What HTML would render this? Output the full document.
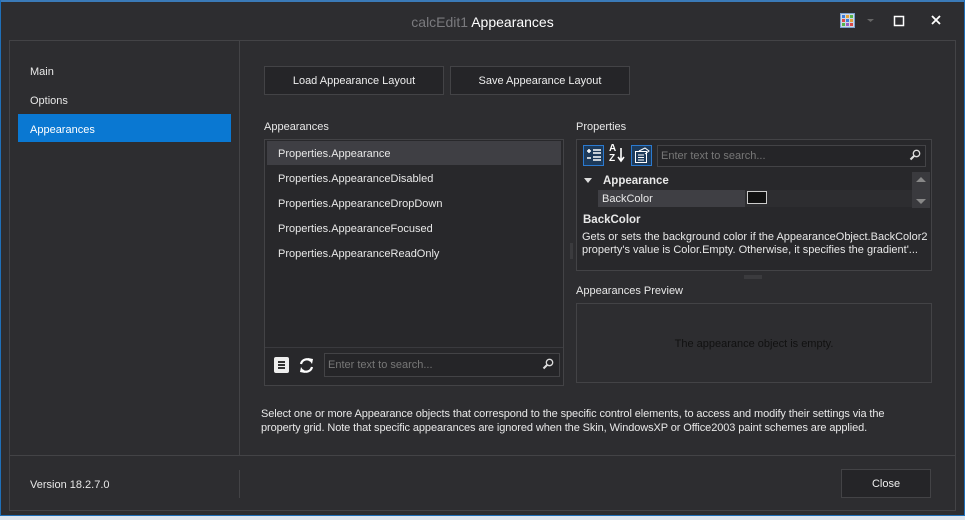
<!DOCTYPE html>
<html><head><meta charset="utf-8"><style>
*{margin:0;padding:0;box-sizing:border-box}
body{width:965px;height:520px;background:#2d2d30;font-family:"Liberation Sans",sans-serif;font-size:11px;color:#e8e8e8;position:relative;overflow:hidden}
.a{position:absolute;white-space:nowrap}
.t{margin-top:1px}
.b{position:absolute;border:1px solid #434346}
.btn{position:absolute;border:1px solid #434346;background:#252528;text-align:center;color:#eee}
</style></head><body>
<div class="a" style="left:0;top:0;width:965px;height:2px;background:#3a7ab8"></div>
<div class="a" style="left:0;top:0;width:1px;height:520px;background:#1f6fb8"></div>
<div class="a" style="right:0;top:0;width:1px;height:520px;background:#1f6fb8"></div>
<div class="a" style="left:0;top:516px;width:965px;height:4px;background:#dfe6ee"></div>
<div class="a" style="left:0;top:515px;width:965px;height:1px;background:#1f6fb8"></div>

<div class="a" style="left:0;width:965px;top:14px;text-align:center;font-size:14px;color:#fff"><span style="color:#7a7a7e">calcEdit1</span> Appearances</div>
<svg class="a" style="left:840px;top:13px" width="15" height="15"><rect x=".5" y=".5" width="14" height="14" fill="#cfd8e6" stroke="#7aa0d0"/><rect x="2" y="2" width="3" height="3" fill="#3c7bd8"/><rect x="6" y="2" width="3" height="3" fill="#e2a13a"/><rect x="10" y="2" width="3" height="3" fill="#56b34a"/><rect x="2" y="6" width="3" height="3" fill="#d94a4a"/><rect x="6" y="6" width="3" height="3" fill="#3c7bd8"/><rect x="10" y="6" width="3" height="3" fill="#e2a13a"/><rect x="2" y="10" width="3" height="3" fill="#56b34a"/><rect x="6" y="10" width="3" height="3" fill="#9a5ac8"/><rect x="10" y="10" width="3" height="3" fill="#d94a4a"/></svg>
<svg class="a" style="left:866px;top:18px" width="9" height="5"><path d="M1 1h7L4.5 4z" fill="#666"/></svg>
<svg class="a" style="left:893px;top:15px" width="12" height="12"><rect x="1.5" y="1.5" width="9" height="9" fill="none" stroke="#fff" stroke-width="1.5"/></svg>
<svg class="a" style="left:931px;top:15px" width="10" height="10"><path d="M1 1L9 9M9 1L1 9" stroke="#fff" stroke-width="1.8"/></svg>

<div class="b" style="left:9px;top:40px;width:947px;height:471px"></div>
<div class="a" style="left:239px;top:41px;width:1px;height:414px;background:#434346"></div>
<div class="a" style="left:10px;top:455px;width:945px;height:1px;background:#434346"></div>
<div class="a" style="left:239px;top:470px;width:1px;height:28px;background:#434346"></div>

<div class="a" style="left:30px;top:66px">Main</div>
<div class="a" style="left:30px;top:95px">Options</div>
<div class="a" style="left:18px;top:114px;width:213px;height:28px;background:#0a78d2"></div>
<div class="a" style="left:30px;top:124px;color:#fff">Appearances</div>

<div class="btn" style="left:264px;top:66px;width:180px;height:29px;line-height:29px">Load Appearance Layout</div>
<div class="btn" style="left:450px;top:66px;width:180px;height:29px;line-height:29px">Save Appearance Layout</div>

<div class="a" style="left:264px;top:121px">Appearances</div>
<div class="b" style="left:264px;top:139px;width:300px;height:247px;background:#28282b"></div>
<div class="a" style="left:267px;top:141px;width:294px;height:24px;background:#3f3f44"></div>
<div class="a" style="left:278px;top:148px">Properties.Appearance</div>
<div class="a" style="left:278px;top:173px">Properties.AppearanceDisabled</div>
<div class="a" style="left:278px;top:198px">Properties.AppearanceDropDown</div>
<div class="a" style="left:278px;top:223px">Properties.AppearanceFocused</div>
<div class="a" style="left:278px;top:248px">Properties.AppearanceReadOnly</div>
<div class="a" style="left:265px;top:347px;width:298px;height:1px;background:#3a3a3e"></div>
<div class="a" style="left:274px;top:357px;width:15px;height:16px;background:#eee;border-radius:2px"></div>
<div class="a" style="left:278px;top:361px;width:7px;height:2px;background:#333;box-shadow:0 3px 0 #333,0 6px 0 #333"></div>
<svg class="a" style="left:298px;top:357px" width="17" height="17" viewBox="0 0 17 17"><path d="M3 7a6 6 0 0 1 10-3M14 10a6 6 0 0 1-10 3" fill="none" stroke="#fff" stroke-width="2.2"/><path d="M10 1l5 1-1 5zM7 16l-5-1 1-5z" fill="#fff"/></svg>
<div class="b" style="left:324px;top:353px;width:236px;height:24px;background:#252528"></div>
<div class="a" style="left:328px;top:359px;color:#777">Enter text to search...</div>
<svg class="a" style="left:542px;top:358px" width="12" height="12"><circle cx="7.5" cy="4.5" r="3.2" fill="none" stroke="#ddd" stroke-width="1.3"/><path d="M5 7L1.5 10.5" stroke="#ddd" stroke-width="2"/></svg>

<div class="a" style="left:570px;top:243px;width:3px;height:16px;background-image:radial-gradient(#666 0.6px,transparent 0.7px);background-size:2px 2px"></div>

<div class="a" style="left:576px;top:121px">Properties</div>
<div class="b" style="left:576px;top:139px;width:356px;height:132px;background:#28282b"></div>
<div class="a" style="left:583px;top:145px;width:21px;height:21px;border:1px solid #2b7ad0;background:#1d3a5a"></div>
<svg class="a" style="left:586px;top:148px" width="16" height="16"><path d="M1 3h4M3 1v4M1 10h4M7 2h8M7 5h8M7 9h8M7 12h8" stroke="#fff" stroke-width="1.5"/></svg>
<div class="a" style="left:609px;top:144px;font-size:10px;font-weight:bold;line-height:10px;color:#fff">A<br>Z</div>
<svg class="a" style="left:617px;top:147px" width="8" height="16"><path d="M4 1v13M1 10l3 4 3-4" stroke="#fff" stroke-width="1.6" fill="none"/></svg>
<div class="a" style="left:631px;top:145px;width:21px;height:21px;border:1px solid #2b7ad0;background:#1d3a5a"></div>
<svg class="a" style="left:634px;top:147px" width="16" height="17"><rect x="1.5" y="4.5" width="11" height="11" fill="none" stroke="#fff"/><path d="M4 8h6M4 10.5h6M4 13h6" stroke="#fff"/><path d="M5 4l6-3 4 3-4 3" fill="none" stroke="#fff"/></svg>
<div class="b" style="left:657px;top:145px;width:269px;height:22px;background:#252528"></div>
<div class="a" style="left:661px;top:150px;color:#777">Enter text to search...</div>
<svg class="a" style="left:909px;top:149px" width="12" height="12"><circle cx="7.5" cy="4.5" r="3.2" fill="none" stroke="#ddd" stroke-width="1.3"/><path d="M5 7L1.5 10.5" stroke="#ddd" stroke-width="2"/></svg>
<svg class="a" style="left:584px;top:178px" width="9" height="6"><path d="M0 0h8L4 5z" fill="#ddd"/></svg>
<div class="a" style="left:603px;top:175px;font-weight:bold;font-size:11.5px">Appearance</div>
<div class="a" style="left:598px;top:190px;width:147px;height:17px;background:#3f3f44"></div>
<div class="a" style="left:745px;top:190px;width:167px;height:17px;background:#2d2d30"></div>
<div class="a" style="left:602px;top:193px">BackColor</div>
<div class="a" style="left:747px;top:191px;width:20px;height:13px;border:1px solid #ccc;background:#111"></div>
<div class="a" style="left:912px;top:172px;width:18px;height:36px;background:#3a3a3e"></div>
<svg class="a" style="left:916px;top:176px" width="10" height="30"><path d="M0 6h10L5 1zM0 23h10L5 28z" fill="#888"/></svg>
<div class="a" style="left:583px;top:214px;font-weight:bold;font-size:11.5px">BackColor</div>
<div class="a" style="left:582px;top:231px">Gets or sets the background color if the AppearanceObject.BackColor2</div>
<div class="a" style="left:582px;top:244px">property's value is Color.Empty. Otherwise, it specifies the gradient'...</div>
<div class="a" style="left:744px;top:275px;width:18px;height:4px;background-image:radial-gradient(#666 0.6px,transparent 0.7px);background-size:2px 2px"></div>

<div class="a" style="left:576px;top:285px">Appearances Preview</div>
<div class="b" style="left:576px;top:303px;width:356px;height:80px"></div>
<div class="a" style="left:576px;width:356px;top:338px;text-align:center;color:#111">The appearance object is empty.</div>

<div class="a" style="left:261px;top:408px;letter-spacing:-0.1px">Select one or more Appearance objects that correspond to the specific control elements, to access and modify their settings via the</div>
<div class="a" style="left:261px;top:422px;letter-spacing:-0.1px">property grid. Note that specific appearances are ignored when the Skin, WindowsXP or Office2003 paint schemes are applied.</div>

<div class="a" style="left:30px;top:479px">Version 18.2.7.0</div>
<div class="btn" style="left:841px;top:469px;width:90px;height:29px;line-height:29px">Close</div>
</body></html>
